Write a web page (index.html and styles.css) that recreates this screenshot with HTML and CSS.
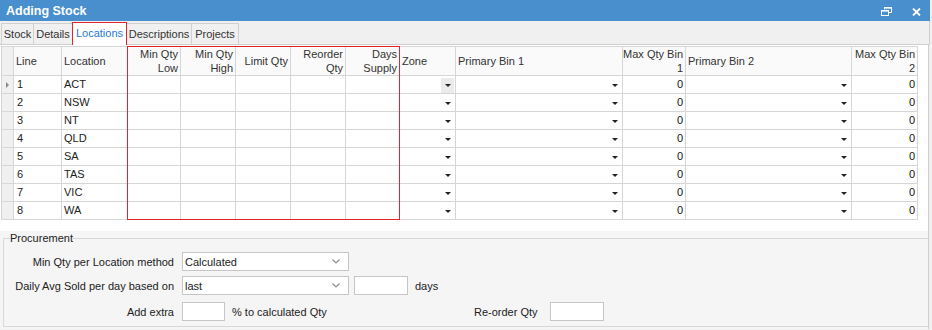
FILE: index.html
```html
<!DOCTYPE html>
<html lang="en">
<head>
    <meta charset="UTF-8">
    <title>Adding Stock</title>
    <link rel="stylesheet" href="styles.css">
</head>
<body>
<div class="window">
    <div class="titlebar">
        <span class="title">Adding Stock</span>
        <svg class="icon-restore" width="11" height="9" viewBox="0 0 11 9">
            <path d="M3.5 2.5V0.5H10.5V5.5H7.5" fill="none" stroke="#fff" stroke-width="1"/>
            <rect x="3" y="0" width="8" height="1.6" fill="#fff"/>
            <rect x="0.5" y="3.5" width="7" height="5" fill="none" stroke="#fff" stroke-width="1"/>
            <rect x="0" y="3" width="8" height="1.6" fill="#fff"/>
        </svg>
        <svg class="icon-close" width="9" height="8" viewBox="0 0 9 8">
            <path d="M1 0.5L8 7.5M8 0.5L1 7.5" stroke="#fff" stroke-width="1.8"/>
        </svg>
    </div>

    <div class="tabs">
        <div class="tab tab-stock">Stock</div>
        <div class="tab tab-details">Details</div>
        <div class="tab tab-locations selected">Locations</div>
        <div class="tab tab-descriptions">Descriptions</div>
        <div class="tab tab-projects">Projects</div>
    </div>

    <div class="panel">
        <div class="grid-area">
            <table class="grid">
                <colgroup>
                    <col class="c-ind">
                    <col class="c-line">
                    <col class="c-loc">
                    <col class="c-minlow">
                    <col class="c-minhigh">
                    <col class="c-limit">
                    <col class="c-reorder">
                    <col class="c-days">
                    <col class="c-zone">
                    <col class="c-pb1">
                    <col class="c-max1">
                    <col class="c-pb2">
                    <col class="c-max2">
                </colgroup>
                <thead>
                <tr>
                    <th class="ind"></th>
                    <th class="left">Line</th>
                    <th class="left">Location</th>
                    <th class="right">Min Qty<br>Low</th>
                    <th class="right">Min Qty<br>High</th>
                    <th class="right">Limit Qty</th>
                    <th class="right">Reorder<br>Qty</th>
                    <th class="right">Days<br>Supply</th>
                    <th class="left">Zone</th>
                    <th class="left">Primary Bin 1</th>
                    <th class="right">Max Qty Bin<br>1</th>
                    <th class="left">Primary Bin 2</th>
                    <th class="right">Max Qty Bin<br>2</th>
                </tr>
                </thead>
                <tbody>
                <tr class="current">
                    <td class="ind"><span class="row-pointer"></span></td>
                    <td class="num">1</td><td class="loc">ACT</td>
                    <td></td><td></td><td></td><td></td><td></td>
                    <td class="dd"><span class="dd-btn focus"><span class="arrow"></span></span></td>
                    <td class="dd"><span class="dd-btn"><span class="arrow"></span></span></td>
                    <td class="qty">0</td>
                    <td class="dd"><span class="dd-btn"><span class="arrow"></span></span></td>
                    <td class="qty">0</td>
                </tr>
                <tr>
                    <td class="ind"></td>
                    <td class="num">2</td><td class="loc">NSW</td>
                    <td></td><td></td><td></td><td></td><td></td>
                    <td class="dd"><span class="dd-btn"><span class="arrow"></span></span></td>
                    <td class="dd"><span class="dd-btn"><span class="arrow"></span></span></td>
                    <td class="qty">0</td>
                    <td class="dd"><span class="dd-btn"><span class="arrow"></span></span></td>
                    <td class="qty">0</td>
                </tr>
                <tr>
                    <td class="ind"></td>
                    <td class="num">3</td><td class="loc">NT</td>
                    <td></td><td></td><td></td><td></td><td></td>
                    <td class="dd"><span class="dd-btn"><span class="arrow"></span></span></td>
                    <td class="dd"><span class="dd-btn"><span class="arrow"></span></span></td>
                    <td class="qty">0</td>
                    <td class="dd"><span class="dd-btn"><span class="arrow"></span></span></td>
                    <td class="qty">0</td>
                </tr>
                <tr>
                    <td class="ind"></td>
                    <td class="num">4</td><td class="loc">QLD</td>
                    <td></td><td></td><td></td><td></td><td></td>
                    <td class="dd"><span class="dd-btn"><span class="arrow"></span></span></td>
                    <td class="dd"><span class="dd-btn"><span class="arrow"></span></span></td>
                    <td class="qty">0</td>
                    <td class="dd"><span class="dd-btn"><span class="arrow"></span></span></td>
                    <td class="qty">0</td>
                </tr>
                <tr>
                    <td class="ind"></td>
                    <td class="num">5</td><td class="loc">SA</td>
                    <td></td><td></td><td></td><td></td><td></td>
                    <td class="dd"><span class="dd-btn"><span class="arrow"></span></span></td>
                    <td class="dd"><span class="dd-btn"><span class="arrow"></span></span></td>
                    <td class="qty">0</td>
                    <td class="dd"><span class="dd-btn"><span class="arrow"></span></span></td>
                    <td class="qty">0</td>
                </tr>
                <tr>
                    <td class="ind"></td>
                    <td class="num">6</td><td class="loc">TAS</td>
                    <td></td><td></td><td></td><td></td><td></td>
                    <td class="dd"><span class="dd-btn"><span class="arrow"></span></span></td>
                    <td class="dd"><span class="dd-btn"><span class="arrow"></span></span></td>
                    <td class="qty">0</td>
                    <td class="dd"><span class="dd-btn"><span class="arrow"></span></span></td>
                    <td class="qty">0</td>
                </tr>
                <tr>
                    <td class="ind"></td>
                    <td class="num">7</td><td class="loc">VIC</td>
                    <td></td><td></td><td></td><td></td><td></td>
                    <td class="dd"><span class="dd-btn"><span class="arrow"></span></span></td>
                    <td class="dd"><span class="dd-btn"><span class="arrow"></span></span></td>
                    <td class="qty">0</td>
                    <td class="dd"><span class="dd-btn"><span class="arrow"></span></span></td>
                    <td class="qty">0</td>
                </tr>
                <tr>
                    <td class="ind"></td>
                    <td class="num">8</td><td class="loc">WA</td>
                    <td></td><td></td><td></td><td></td><td></td>
                    <td class="dd"><span class="dd-btn"><span class="arrow"></span></span></td>
                    <td class="dd"><span class="dd-btn"><span class="arrow"></span></span></td>
                    <td class="qty">0</td>
                    <td class="dd"><span class="dd-btn"><span class="arrow"></span></span></td>
                    <td class="qty">0</td>
                </tr>
                </tbody>
            </table>
            <div class="highlight"></div>
        </div>

        <div class="procurement">
            <fieldset>
                <legend>Procurement</legend>
                <div class="form-row">
                    <span class="label">Min Qty per Location method</span>
                    <div class="select select-wide">
                        <span>Calculated</span>
                        <svg width="8" height="5" viewBox="0 0 8 5"><path d="M0.5 0.5L4 4L7.5 0.5" fill="none" stroke="#8c8c8c" stroke-width="1.2"/></svg>
                    </div>
                </div>
                <div class="form-row">
                    <span class="label">Daily Avg Sold per day based on</span>
                    <div class="select select-wide">
                        <span>last</span>
                        <svg width="8" height="5" viewBox="0 0 8 5"><path d="M0.5 0.5L4 4L7.5 0.5" fill="none" stroke="#8c8c8c" stroke-width="1.2"/></svg>
                    </div>
                    <div class="box box-days"></div>
                    <span class="after">days</span>
                </div>
                <div class="form-row row-last">
                    <span class="label">Add extra</span>
                    <div class="box box-extra"></div>
                    <span class="after after-extra">% to calculated Qty</span>
                    <span class="reorder-label">Re-order Qty</span>
                    <div class="box box-reorder"></div>
                </div>
            </fieldset>
        </div>
    </div>
</div>
</body>
</html>
```

FILE: styles.css
```css
body {
    margin: 0;
    width: 932px;
    height: 330px;
    overflow: hidden;
    background-color: #f0f0f0;
    font-family: "Liberation Sans", Arial, sans-serif;
    font-size: 11px;
    color: #222;
}

.window {
    width: 930px;
}

.titlebar {
    height: 21px;
    display: flex;
    align-items: center;
    padding: 0 9px 0 6px;
    background-color: #4a8fcd;
    color: #fff;
}

.title {
    font-weight: bold;
    font-size: 12.5px;
    margin-top: 1px;
}

.icon-restore {
    margin-left: auto;
    margin-right: 20px;
    margin-top: 1px;
}

.icon-close {
    margin-top: 2px;
}

.tabs {
    display: flex;
    align-items: flex-start;
    height: 23px;
    padding-left: 1px;
    background-color: #f0f0f0;
    border-bottom: 1px solid #cfcfcf;
    width: 928px;
    border-right: 1px solid #cfcfcf;
}

.tab {
    box-sizing: border-box;
    height: 22px;
    margin-top: 2px;
    line-height: 20px;
    text-align: center;
    color: #333;
    border-top: 1px solid #d0d0d0;
    border-right: 1px solid #d0d0d0;
}

.tab-stock {
    width: 33px;
    border-left: 1px solid #d0d0d0;
}

.tab-details {
    width: 39px;
}

.tab-locations {
    width: 55px;
}

.tab-descriptions {
    width: 65px;
}

.tab-projects {
    width: 47px;
}

.tab.selected {
    position: relative;
    height: 25px;
    margin-top: 1px;
    margin-left: -1px;
    line-height: 21px;
    background-color: #fff;
    color: #1f7bd6;
    border: 1px solid #e3242b;
}

.panel {
    width: 928px;
    border-right: 1px solid #cfcfcf;
}

.grid-area {
    position: relative;
    height: 186px;
    background-color: #fff;
    padding-top: 1px;
    box-sizing: border-box;
}

.grid {
    table-layout: fixed;
    width: 917px;
    margin-left: 1px;
    border-spacing: 0;
}

.c-ind { width: 13px; }
.c-line { width: 48px; }
.c-loc { width: 66px; }
.c-minlow { width: 53px; }
.c-minhigh { width: 55px; }
.c-limit { width: 55px; }
.c-reorder { width: 55px; }
.c-days { width: 54px; }
.c-zone { width: 56px; }
.c-pb1 { width: 167px; }
.c-max1 { width: 63px; }
.c-pb2 { width: 166px; }
.c-max2 { width: 66px; }

.grid th,
.grid td {
    box-sizing: border-box;
    padding: 0;
    border-right: 1px solid #d6d6d6;
    border-bottom: 1px solid #d6d6d6;
    white-space: nowrap;
    overflow: hidden;
}

.grid th {
    height: 30px;
    border-top: 1px solid #d6d6d6;
    background-color: #fafafa;
    font-weight: normal;
    color: #333;
    line-height: 14px;
    vertical-align: middle;
}

.grid th.left {
    text-align: left;
    padding-left: 2px;
}

.grid th.right {
    text-align: right;
    padding-right: 2px;
}

.grid th.ind,
.grid td.ind {
    border-left: 1px solid #d6d6d6;
    background-color: #f0f0f0;
}

.grid td {
    height: 18px;
    line-height: 17px;
}

.grid td.num {
    padding-left: 3px;
}

.grid td.loc {
    padding-left: 2px;
}

.grid td.qty {
    text-align: right;
    padding-right: 2px;
    color: #111;
}

.grid td.dd {
    text-align: right;
    padding-right: 1px;
}

.row-pointer {
    display: block;
    width: 0;
    height: 0;
    margin-left: 4px;
    border-top: 3px solid transparent;
    border-bottom: 3px solid transparent;
    border-left: 3px solid #8a8a8a;
}

.dd-btn {
    display: inline-flex;
    align-items: center;
    justify-content: center;
    width: 13px;
    height: 15px;
    vertical-align: middle;
}

.dd-btn.focus {
    background-color: #ebebeb;
}

.arrow {
    width: 0;
    height: 0;
    border-left: 3px solid transparent;
    border-right: 3px solid transparent;
    border-top: 3px solid #222;
}

.highlight {
    position: absolute;
    left: 127px;
    top: 1px;
    width: 273px;
    height: 174px;
    box-sizing: border-box;
    border: 1px solid #e3242b;
    pointer-events: none;
}

.procurement {
    height: 98px;
    padding-top: 1px;
    box-sizing: border-box;
    background-color: #f5f5f5;
}

fieldset {
    margin: 0 0 0 3px;
    padding: 0 0 0 6px;
    height: 95px;
    box-sizing: border-box;
    border: 1px solid #d8d8d8;
    border-right: none;
}

legend {
    padding: 0;
    line-height: 13px;
    color: #222;
}

.form-row {
    display: flex;
    align-items: center;
    height: 19px;
    margin-top: 5px;
}

.form-row:first-of-type {
    margin-top: 7px;
}

.form-row.row-last {
    margin-top: 7px;
}

.label {
    width: 164px;
    margin-right: 8px;
    text-align: right;
}

.select {
    box-sizing: border-box;
    height: 19px;
    display: flex;
    align-items: center;
    justify-content: space-between;
    padding: 0 8px 0 2px;
    background-color: #fff;
    border: 1px solid #c6c6c6;
}

.select-wide {
    width: 167px;
}

.box {
    box-sizing: border-box;
    height: 19px;
    background-color: #fff;
    border: 1px solid #c6c6c6;
}

.box-days {
    width: 54px;
    margin-left: 5px;
}

.box-extra {
    width: 43px;
}

.box-reorder {
    width: 54px;
    margin-left: 11px;
}

.after {
    margin-left: 7px;
}

.after-extra {
    width: 242px;
}

.reorder-label {
    width: 65px;
}
```
